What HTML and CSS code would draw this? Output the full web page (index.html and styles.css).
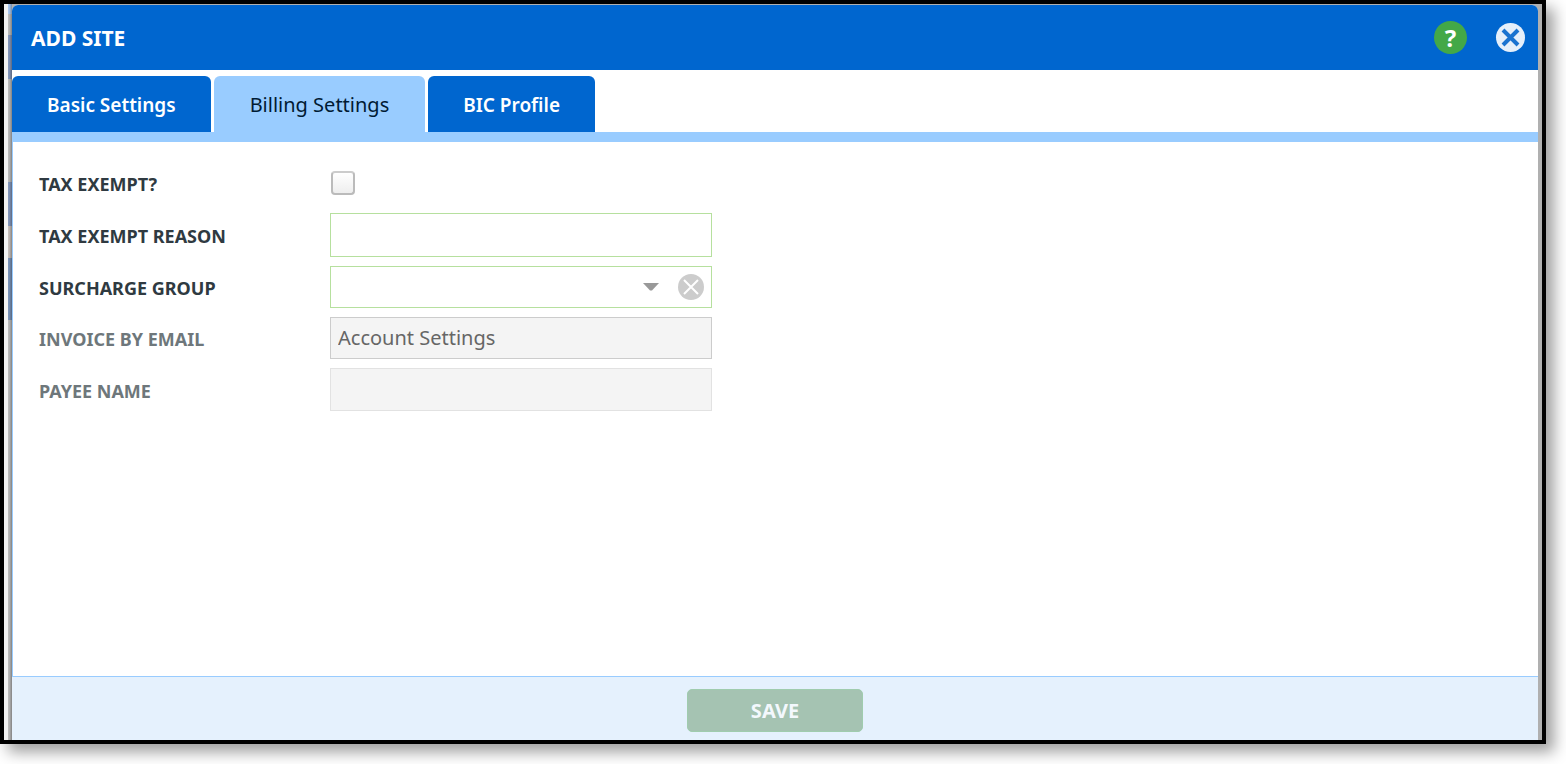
FILE: index.html
```html
<!doctype html>
<html lang="en">
<head>
	<meta charset="UTF-8">
	<title>Add Site</title>
	<link rel="stylesheet" href="styles.css">
</head>
<body>
	<div class="frame">
		<div class="backdrop-left"></div>
		<main class="dialog">
			<header class="dialog-header">
				<h1>ADD SITE</h1>
				<button type="button" class="icon-btn help-btn" aria-label="Help">?</button>
				<button type="button" class="icon-btn close-btn" aria-label="Close">
					<svg viewBox="0 0 30 30" width="30" height="30">
						<circle cx="15.5" cy="14.5" r="14.5" fill="#e5effa"/>
						<path d="M8 7L23 22M23 7L8 22" stroke="#1a73d0" stroke-width="4" fill="none"/>
					</svg>
				</button>
			</header>
			<nav class="tabs">
				<button type="button" class="tab">Basic Settings</button>
				<button type="button" class="tab active">Billing Settings</button>
				<button type="button" class="tab">BIC Profile</button>
			</nav>
			<form class="settings" id="billing">
				<div class="row">
					<label for="exempt">TAX EXEMPT?</label>
					<input type="checkbox" id="exempt" class="check">
				</div>
				<div class="row">
					<label for="reason">TAX EXEMPT REASON</label>
					<input type="text" id="reason" class="field field-tall">
				</div>
				<div class="row">
					<label for="surcharge">SURCHARGE GROUP</label>
					<div class="field combo">
						<select id="surcharge">
							<option value=""></option>
						</select>
						<svg class="arrow" viewBox="0 0 16 8" width="16" height="8">
							<path d="M0 0H16L9 7.5H7Z" fill="#999"/>
						</svg>
						<button type="button" class="icon-btn clear-btn" aria-label="Clear">
							<svg viewBox="0 0 26 26" width="26" height="26">
								<circle cx="13" cy="13" r="13" fill="#ccc"/>
								<path d="M6 6L20 20M20 6L6 20" stroke="#fff" stroke-width="2" fill="none"/>
							</svg>
						</button>
					</div>
				</div>
				<div class="row disabled">
					<label for="invoice">INVOICE BY EMAIL</label>
					<input type="text" id="invoice" class="field" value="Account Settings" disabled>
				</div>
				<div class="row disabled">
					<label for="payee">PAYEE NAME</label>
					<input type="text" id="payee" class="field field-empty" disabled>
				</div>
			</form>
			<footer class="dialog-footer">
				<button type="submit" form="billing" class="save-btn" disabled>SAVE</button>
			</footer>
		</main>
	</div>
</body>
</html>
```
FILE: styles.css
```css
* {
	box-sizing: border-box;
}
body {
	display: flex;
	min-height: 100vh;
	margin: 0;
	padding: 0 20px 20px 0;
	background: #fff;
	font: 20px/28px "Noto Sans", "Open Sans", sans-serif;
}
button, input, select {
	margin: 0;
	font: inherit;
}
h1 {
	margin: 0;
}
.frame {
	display: flex;
	flex: 1;
	border: 4px solid #000;
	padding: 1px 4px 0 0;
	background: #b0b0b0;
	box-shadow: 8px 8px 14px rgba(0, 0, 0, .38);
}
/* the page behind the dialog */
.backdrop-left {
	width: 8px;
	margin-top: -1px;
	background:
		linear-gradient(to right, #f3f3f3 4px, transparent 4px, transparent 5px, rgba(0, 0, 0, .3)),
		linear-gradient(#a9c8f0 10px, #bbb 10px, #bbb 31px, #8497bb 31px, #8497bb 75px, #bbb 75px, #bbb 178px, #8497bb 178px, #8497bb 222px, #c4bdb9 222px, #c4bdb9 254px, #7a93b8 254px, #7a93b8 316px, #bbb 316px);
}
.dialog {
	display: flex;
	flex: 1;
	flex-direction: column;
	border-radius: 6px 6px 0 0;
	background: #fff;
	overflow: hidden;
}
.dialog-header {
	display: flex;
	align-items: center;
	height: 65px;
	padding: 0 13px 0 19px;
	background: #0066cf;
	color: #fff;
}
.dialog-header h1 {
	flex: 1;
	font-size: 21px;
	font-weight: 700;
}
.icon-btn {
	display: flex;
	align-items: center;
	justify-content: center;
	padding: 0;
	border: 0;
	background: none;
}
.help-btn {
	width: 33px;
	height: 33px;
	margin-right: 28px;
	border-radius: 50%;
	background: #43a847;
	color: #fff;
	font-size: 24px;
	font-weight: 700;
}
/* tabs */
.tabs {
	display: flex;
	gap: 3px;
	padding-top: 6px;
	border-bottom: 10px solid #9cf;
}
.tab {
	height: 56px;
	padding: 2px 35px 0;
	border: 0;
	border-radius: 6px 6px 0 0;
	background: #0066cf;
	color: #fff;
	font-size: 19px;
	font-weight: 600;
}
.tab.active {
	padding: 2px 36px 0;
	background: #9cf;
	color: #001a33;
	font-size: 20px;
	font-weight: 400;
}
/* form */
.settings {
	display: flex;
	flex: 1;
	flex-direction: column;
	gap: 9px;
	padding: 20px 26px;
	border-left: 1px solid #9cf;
}
.row {
	display: flex;
	align-items: center;
	min-height: 42px;
}
.row label {
	width: 291px;
	padding-top: 2px;
	color: #2f3a41;
	font-size: 18px;
	font-weight: 700;
}
.disabled label {
	color: #6e777b;
}
.check {
	appearance: none;
	width: 24px;
	height: 24px;
	margin-left: 1px;
	border: 2px solid #bbb;
	border-top-color: #ccc;
	border-radius: 4px;
	background: linear-gradient(#fff, #eee);
}
.field {
	width: 382px;
	height: 42px;
	padding: 0 7px 2px;
	border: 1px solid #b6e09e;
	border-radius: 0;
	background: #fff;
	font-size: 20px;
}
.field-tall {
	height: 44px;
}
.combo {
	display: flex;
	align-items: center;
	padding: 0 7px 0 0;
}
.combo select {
	flex: 1;
	height: 40px;
	margin-right: -16px;
	border: 0;
	background: none;
	appearance: none;
}
.arrow {
	margin-right: 19px;
	pointer-events: none;
}
.disabled .field {
	border-color: #ccc;
	background: #f4f4f4;
	color: #666;
}
.disabled .field-empty {
	height: 43px;
	border-color: #e2e2e2;
}
/* footer */
.dialog-footer {
	display: flex;
	justify-content: center;
	padding: 12px 0 8px;
	border-top: 1px solid #9cf;
	background: #e5f1fd;
}
.save-btn {
	width: 176px;
	height: 43px;
	padding: 0;
	border: 1px solid #a0ccae;
	border-radius: 5px;
	background: #a5c3b2;
	color: #f3f8fd;
	font-weight: 700;
}
```
